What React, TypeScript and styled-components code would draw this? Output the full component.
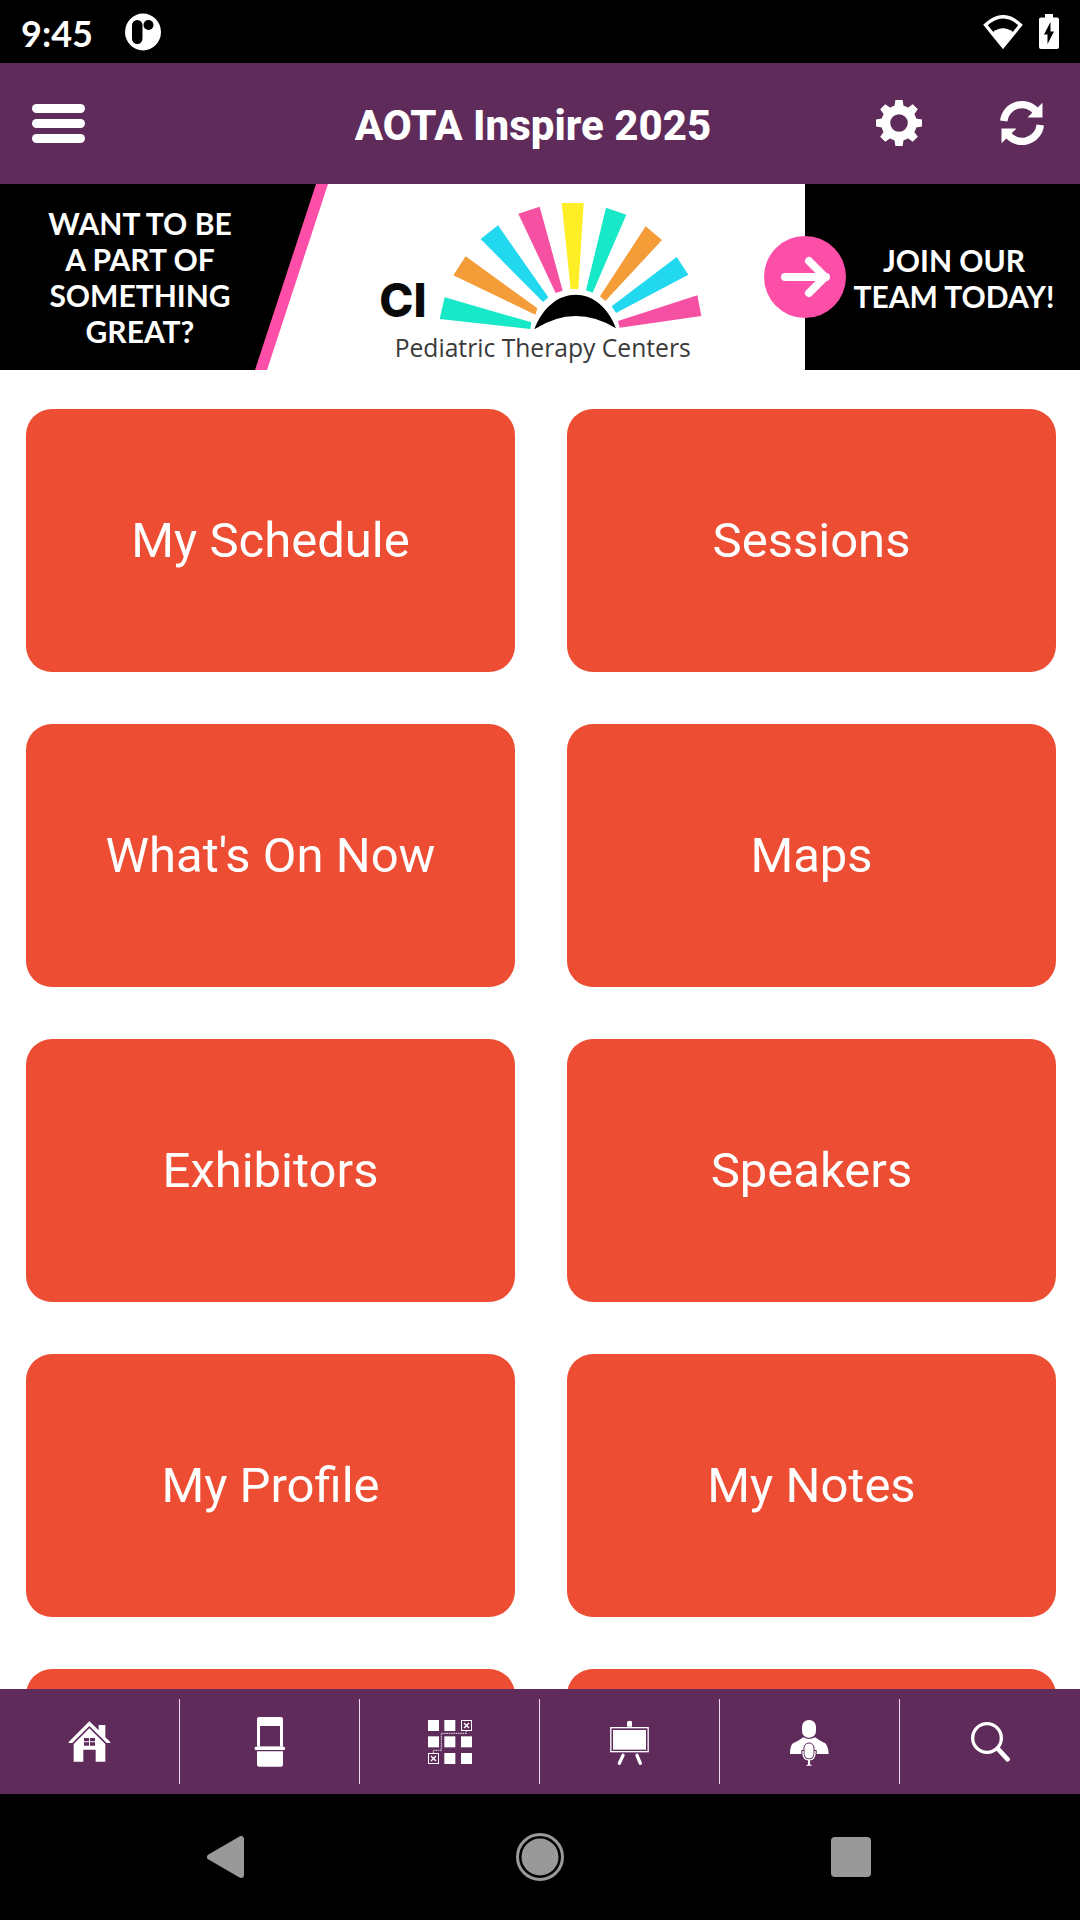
import React from "react";
import styled, { createGlobalStyle } from "styled-components";

const GlobalStyle = createGlobalStyle`
  *, *::before, *::after { box-sizing: border-box; }
  html, body, #root { height: 100%; }
  body {
    margin: 0;
    background: #ffffff;
    font-family: Roboto, "Noto Sans", sans-serif;
  }
`;

const Screen = styled.div`
  display: flex;
  flex-direction: column;
  height: 100vh;
  overflow: hidden;
`;

const StatusBar = styled.div`
  display: flex;
  flex: none;
  align-items: center;
  justify-content: space-between;
  height: 63px;
  padding: 0 21px;
  background: #000000;
  color: #ffffff;
`;

const StatusGroup = styled.div<{ $gap: number }>`
  display: flex;
  align-items: center;
  gap: ${(p) => p.$gap}px;
`;

const Clock = styled.time`
  min-width: 76px;
  padding-top: 2px;
  font-family: Lato, Roboto, sans-serif;
  font-size: 36px;
  font-weight: 700;
  line-height: 42px;
`;

const Header = styled.header`
  display: grid;
  flex: none;
  grid-template-columns: 202px 1fr 216px;
  align-items: center;
  height: 121px;
  background: #5f2b5b;
  color: #ffffff;
`;

const Title = styled.h1`
  margin: 0;
  padding-top: 4px;
  font-size: 42px;
  font-weight: 800;
  line-height: 50px;
  text-align: center;
`;

const Actions = styled.div`
  display: flex;
  gap: 62px;
`;

const IconButton = styled.button<{ $indent?: number }>`
  display: flex;
  margin: 0 0 0 ${(p) => p.$indent ?? 0}px;
  padding: 0;
  border: 0;
  background: none;
  color: inherit;
  cursor: pointer;
`;

const Banner = styled.a`
  display: grid;
  flex: none;
  grid-template-columns: 328fr 477fr 275fr;
  height: 186px;
  background: #ffffff;
  color: #ffffff;
  text-decoration: none;
`;

const Stripe = styled.div`
  background: #fd4fa8;
  clip-path: polygon(0 0, 100% 0, 267px 100%, 0 100%);
`;

const Question = styled.div`
  display: flex;
  align-items: center;
  height: 100%;
  background: #000000;
  clip-path: polygon(0 0, 316px 0, 255px 100%, 0 100%);
`;

const BannerText = styled.p<{ $width: number }>`
  width: ${(p) => p.$width}px;
  margin: 0;
  font-family: Lato, "Open Sans", sans-serif;
  font-size: 30px;
  font-weight: 700;
  line-height: 36px;
  text-align: center;
  white-space: nowrap;
`;

const LogoArea = styled.div`
  display: flex;
  justify-content: flex-start;
  padding-left: 42px;
`;

const Invite = styled.div`
  position: relative;
  display: flex;
  align-items: center;
  justify-content: flex-end;
  padding: 2px 18px 0 0;
  background: #000000;
`;

const ArrowBadge = styled.svg`
  position: absolute;
  top: 52px;
  left: -41px;
`;

const Main = styled.main`
  flex: 1;
  min-height: 0;
  overflow: hidden;
  padding: 39px 24px 0 26px;
`;

const Tiles = styled.div`
  display: grid;
  grid-template-columns: 1fr 1fr;
  grid-auto-rows: 263px;
  gap: 52px;
`;

const Tile = styled.button`
  padding: 0;
  border: 0;
  border-radius: 26px;
  background: #ed4e33;
  color: #ffffff;
  font-family: inherit;
  font-size: 49px;
  line-height: 56px;
  cursor: pointer;
`;

const TabBar = styled.nav`
  display: grid;
  flex: none;
  grid-template-columns: repeat(6, 1fr);
  height: 105px;
  padding: 10px 0;
  background: #5f2b5b;
`;

const Tab = styled.a`
  display: flex;
  align-items: center;
  justify-content: center;
  border-right: 1px solid #f0d8ee;
  color: #ffffff;

  &:last-child { border-color: transparent; }
`;

const SystemBar = styled.div`
  display: flex;
  flex: none;
  align-items: center;
  justify-content: center;
  gap: 263px;
  height: 126px;
  background: #000000;
  color: #999999;
`;

const plum = "#5f2b5b";

const NotificationIcon = () => (
  <svg width="36" height="38" viewBox="0 0 36 38" aria-hidden="true">
    <ellipse cx="18" cy="19" rx="18" ry="18.5" fill="#fff" />
    <rect x="7" y="7" width="10.5" height="24" rx="5.2" fill="#000" />
    <circle cx="23.5" cy="12" r="5" fill="#000" />
  </svg>
);

const WifiIcon = () => (
  <svg width="40" height="34" viewBox="0 0 40 34" aria-hidden="true">
    <path d="M2.5 10Q20-6.500 37.500 10L20 31.500z" fill="none" stroke="#fff" strokeWidth="3.400" />
    <path d="M10 17Q20 9.500 30 17L20 32z" fill="#fff" />
  </svg>
);

const BatteryIcon = () => (
  <svg width="20" height="35" viewBox="0 0 20 35" aria-hidden="true">
    <path d="M6 0h8v3.500h4a2 2 0 0 1 2 2V33a2 2 0 0 1-2 2H2a2 2 0 0 1-2-2V5.500a2 2 0 0 1 2-2h4z" fill="#fff" />
    <path d="M11.500 8L5 20.500h3.500V30L15 17.500h-3.500z" fill="#000" />
  </svg>
);

const MenuIcon = () => (
  <svg width="53" height="39" viewBox="0 0 53 39" fill="currentColor" aria-hidden="true">
    <rect width="53" height="9" rx="4.500" />
    <rect y="15" width="53" height="9" rx="4.500" />
    <rect y="30" width="53" height="9" rx="4.500" />
  </svg>
);

const GearIcon = () => (
  <svg width="46" height="47" viewBox="-23 -23 46 47" fill="currentColor" aria-hidden="true">
    {[0, 45, 90, 135, 180, 225, 270, 315].map((a) => (
      <path key={a} transform={`rotate(${a})`} d="M-3.600-23H3.600L5-14H-5z" />
    ))}
    <circle r="13.300" fill="none" stroke="currentColor" strokeWidth="9" />
  </svg>
);

const RefreshIcon = () => (
  <svg width="44" height="47" viewBox="-22 -23 44 47" aria-hidden="true">
    {[0, 180].map((a) => (
      <g key={a} transform={`rotate(${a})`}>
        <path d="M-18.300-2A18.400 18.400 0 0 1 14.500-11.300" fill="none" stroke="currentColor" strokeWidth="7.400" />
        <path d="M20.500-20.300V-5.500H5.500z" fill="currentColor" />
      </g>
    ))}
  </svg>
);

/* Sun rays as quadrilaterals, drawn on a grid of three units per pixel. */
const rays: [string, string][] = [
  ["#16e8c8", "254,352 514,427 511,447 239,417"],
  ["#f39c38", "317,229 532,385 526,404 280,286"],
  ["#22d8ee", "414,136 565,352 549,366 362,177"],
  ["#f550a2", "539,80 608,332 587,339 475,101"],
  ["#fdee25", "605,69 671,69 655,327 632,327"],
  ["#16e8c8", "738,83 799,104 698,338 678,331"],
  ["#f39c38", "857,139 906,180 736,363 720,349"],
  ["#22d8ee", "950,231 985,284 768,399 755,379"],
  ["#f550a2", "1012,346 1024,408 779,443 774,423"],
];

const SunLogo = () => (
  <svg width="350" height="186" viewBox="30 12 1050 558" role="img" aria-label="CI Pediatric Therapy Centers">
    {rays.map(([fill, points]) => (
      <polygon key={points} points={points} fill={fill} />
    ))}
    <path d="M523 448C575 310 718 310 768 445Q645 370 523 448z" fill="#000" />
    <text x="58" y="410" fontFamily="Inter, sans-serif" fontSize="138" fontWeight="800" fill="#0a0a0a">
      CI
    </text>
    <text x="104" y="530" fontFamily="'Open Sans', 'Noto Sans', sans-serif" fontSize="74" fill="#3a3a3a">
      Pediatric Therapy Centers
    </text>
  </svg>
);

/* Tab icons share one drawing box: 61px square, three units per pixel. */
const TabIcon = ({ children }: { children: React.ReactNode }) => (
  <svg width="61" height="61" viewBox="177 183 183 183" fill="currentColor" aria-hidden="true">
    {children}
  </svg>
);

const HomeIcon = () => (
  <TabIcon>
    <path d="M268 214L296 241V225H316V262L331 276V279H320L268 228L217 279H206V276z" />
    <path d="M268 235L316 282V335H287V299H250V335H221V282z" />
    <path d="M252 264h15v10h-15zM270 264h15v10h-15zM252 277h15v10h-15zM270 277h15v10h-15z" fill={plum} />
  </TabIcon>
);

const BoothIcon = () => (
  <TabIcon>
    <path fillRule="evenodd" d="M237 201H303Q309 201 309 207V290H231V207Q231 201 237 201zM240 228V289H300V228z" />
    <rect x="224" y="290" width="91" height="10" rx="3" />
    <path d="M231 304H309V344Q309 350 303 350H237Q231 350 231 344z" />
  </TabIcon>
);

const MapIcon = () => (
  <TabIcon>
    {[[204, 210], [253, 210], [204, 259], [253, 259], [303, 259], [253, 309], [303, 309]].map(([x, y]) => (
      <rect key={`${x}-${y}`} x={x} y={y} width="33" height="33" />
    ))}
    {[[303, 210], [204, 309]].map(([x, y]) => (
      <g key={x} fill="none" stroke="currentColor">
        <rect x={x + 1.5} y={y + 1.5} width="30" height="30" strokeWidth="3" />
        <path d={`M${x + 9} ${y + 9}l15 15M${x + 24} ${y + 9}l-15 15`} strokeWidth="4" />
      </g>
    ))}
    <path d="M319 242V250H244V301H220V309" fill="none" stroke="currentColor" strokeWidth="2.500" strokeDasharray="5 2" />
  </TabIcon>
);

const EaselIcon = () => (
  <TabIcon>
    <path d="M261 230V219Q261 212 269 212T276 219V230z" />
    <rect x="212.500" y="233" width="112" height="72" fill="none" stroke="currentColor" strokeWidth="4" />
    <rect x="219" y="240" width="99" height="59" />
    <path d="M249 316L238 340M291 316L301 340" stroke="currentColor" strokeWidth="10" strokeLinecap="round" />
  </TabIcon>
);

const SpeakerIcon = () => (
  <TabIcon>
    <rect x="246" y="210" width="42" height="53" rx="20" />
    <path d="M210 312Q210 287 219 280Q232 275 250 262Q267 272 285 262Q303 275 316 280Q325 290 326 312z" />
    <path d="M246 300V312Q250 332 267 333Q284 332 288 312V300" fill={plum} stroke={plum} strokeWidth="4" />
    <rect x="252" y="279" width="30" height="48" rx="15" stroke={plum} strokeWidth="3" />
    <path d="M249 303V310Q249 330 267 330T285 310V303" fill="none" stroke="currentColor" strokeWidth="4" />
    <path d="M264 330H270V343L277 347H257L264 343z" />
  </TabIcon>
);

const SearchIcon = () => (
  <TabIcon>
    <circle cx="261" cy="264" r="43" fill="none" stroke="currentColor" strokeWidth="10" />
    <path d="M293 296L323 328" stroke="currentColor" strokeWidth="14" strokeLinecap="round" />
  </TabIcon>
);

const tiles = [
  "My Schedule",
  "Sessions",
  "What's On Now",
  "Maps",
  "Exhibitors",
  "Speakers",
  "My Profile",
  "My Notes",
];

const tabs = [
  { label: "Home", Icon: HomeIcon },
  { label: "Exhibitors", Icon: BoothIcon },
  { label: "Maps", Icon: MapIcon },
  { label: "Sessions", Icon: EaselIcon },
  { label: "Speakers", Icon: SpeakerIcon },
  { label: "Search", Icon: SearchIcon },
];

export default function App() {
  return (
    <Screen>
      <GlobalStyle />
      <StatusBar>
        <StatusGroup $gap={28}>
          <Clock>9:45</Clock>
          <NotificationIcon />
        </StatusGroup>
        <StatusGroup $gap={16}>
          <WifiIcon />
          <BatteryIcon />
        </StatusGroup>
      </StatusBar>

      <Header>
        <IconButton type="button" aria-label="Menu" $indent={32}>
          <MenuIcon />
        </IconButton>
        <Title>AOTA Inspire 2025</Title>
        <Actions>
          <IconButton type="button" aria-label="Settings" $indent={12}>
            <GearIcon />
          </IconButton>
          <IconButton type="button" aria-label="Refresh" $indent={16}>
            <RefreshIcon />
          </IconButton>
        </Actions>
      </Header>

      <Banner href="#join">
        <Stripe>
          <Question>
            <BannerText $width={280}>
              WANT TO BE
              <br />A PART OF
              <br />
              SOMETHING
              <br />
              GREAT?
            </BannerText>
          </Question>
        </Stripe>
        <LogoArea>
          <SunLogo />
        </LogoArea>
        <Invite>
          <ArrowBadge width="82" height="82" viewBox="0 0 82 82" aria-hidden="true">
            <circle cx="41" cy="41" r="41" fill="#fd4fa8" />
            <path d="M21 41H62M45 25L61 41L45 57" fill="none" stroke="#fff" strokeWidth="8" strokeLinecap="round" strokeLinejoin="round" />
          </ArrowBadge>
          <BannerText $width={216}>
            JOIN OUR
            <br />
            TEAM TODAY!
          </BannerText>
        </Invite>
      </Banner>

      <Main>
        <Tiles>
          {tiles.map((name) => (
            <Tile key={name} type="button">
              {name}
            </Tile>
          ))}
          <Tile type="button" aria-label="More" />
          <Tile type="button" aria-label="More" />
        </Tiles>
      </Main>

      <TabBar aria-label="Sections">
        {tabs.map(({ label, Icon }) => (
          <Tab key={label} href={`#${label.toLowerCase()}`} aria-label={label}>
            <Icon />
          </Tab>
        ))}
      </TabBar>

      <SystemBar>
        <IconButton type="button" aria-label="Back">
          <svg width="48" height="48" viewBox="0 0 48 48" aria-hidden="true">
            <path d="M5 24L36 6V42z" fill="currentColor" stroke="currentColor" strokeWidth="6" strokeLinejoin="round" />
          </svg>
        </IconButton>
        <IconButton type="button" aria-label="Home screen">
          <svg width="48" height="48" viewBox="0 0 48 48" aria-hidden="true">
            <circle cx="24" cy="24" r="22.500" fill="none" stroke="currentColor" strokeWidth="3" />
            <circle cx="24" cy="24" r="18.500" fill="currentColor" />
          </svg>
        </IconButton>
        <IconButton type="button" aria-label="Recent apps">
          <svg width="48" height="48" viewBox="0 0 48 48" aria-hidden="true">
            <rect x="4" y="4" width="40" height="40" rx="4" fill="currentColor" />
          </svg>
        </IconButton>
      </SystemBar>
    </Screen>
  );
}
